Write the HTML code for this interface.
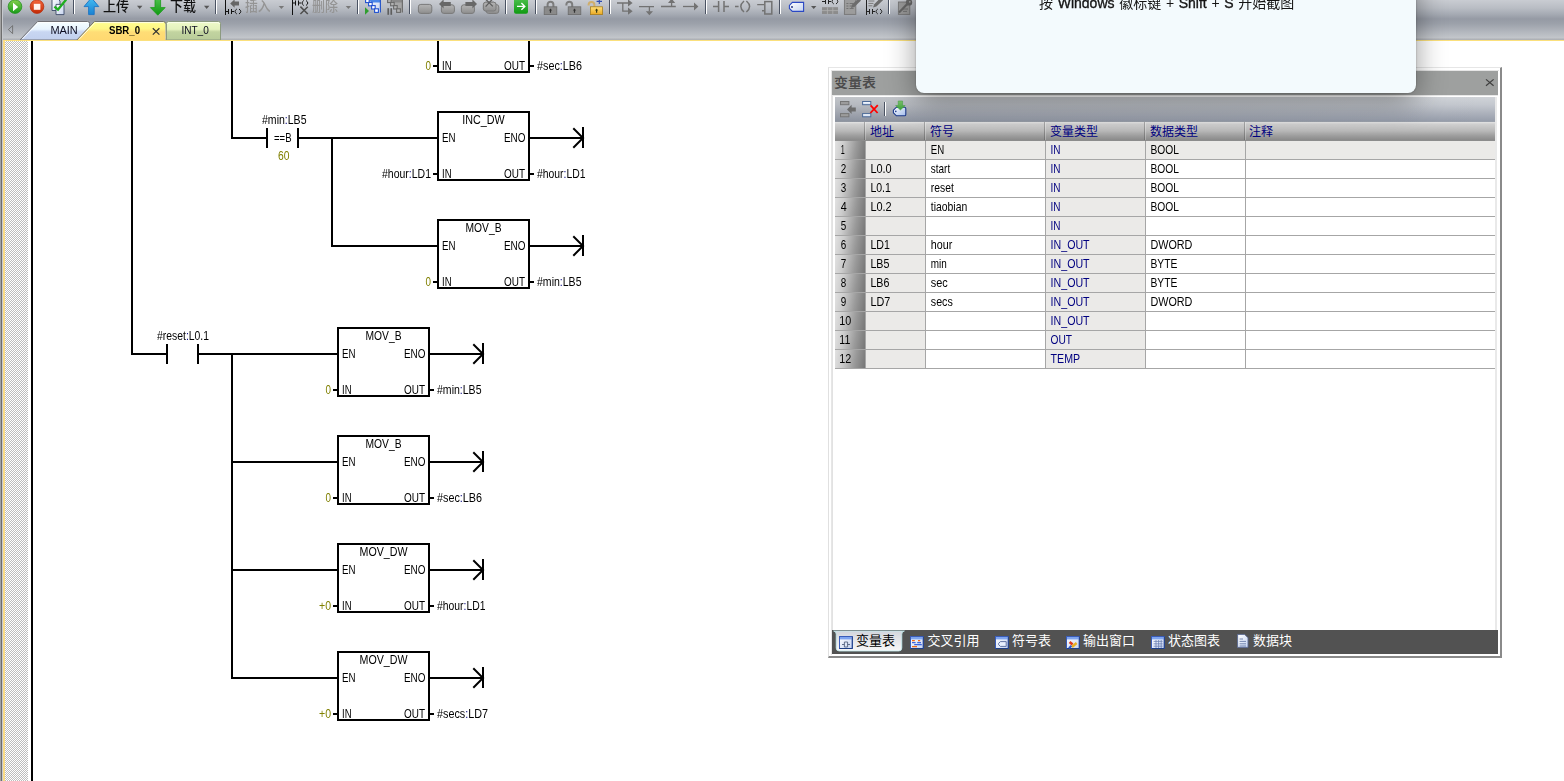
<!DOCTYPE html>
<html><head><meta charset="utf-8"><title>SBR_0</title>
<style>
html,body{margin:0;padding:0;}
body{width:1564px;height:781px;overflow:hidden;background:#fff;position:relative;font-family:"Liberation Sans","Noto Sans CJK SC",sans-serif;}
.abs{position:absolute;}
#tb{left:0;top:0;width:1564px;height:40px;background:linear-gradient(to bottom,#c9ccd2 0px,#b9bdc4 8px,#a6abb4 14px,#959aa4 19px,#9da2ab 24px,#b3b7be 32px,#c3c6cb 38px,#aeb1b6 39px,#aeb1b6 40px);}
#yl{left:3px;top:40px;width:1561px;height:1px;background:#fbe07c;}
#lb{left:0;top:0;width:3px;height:781px;background:linear-gradient(to right,#a2a2a2 0,#a2a2a2 1px,#6e6e6e 1px,#6e6e6e 2px,#c6c9ce 2px,#c6c9ce 3px);}
#ly{left:3px;top:40px;width:2px;height:741px;background:#fbdc86;}
#gut{left:5px;top:41px;width:23px;height:740px;background-color:#fff;background-image:linear-gradient(45deg,#bdbdbd 25%,transparent 25%,transparent 75%,#bdbdbd 75%),linear-gradient(45deg,#bdbdbd 25%,transparent 25%,transparent 75%,#bdbdbd 75%);background-size:2px 2px;background-position:0 0,1px 1px;}
svg{position:absolute;left:0;top:0;overflow:visible;}
#lad,#ptx{will-change:transform;}
.lt{font-family:"Liberation Sans",sans-serif;font-size:12.4px;fill:#000;}
.ol{fill:#808000;}
.cj{font-family:"Liberation Sans","Noto Sans CJK SC",sans-serif;}
</style></head><body>
<div class="abs" id="tb"></div><div class="abs" id="lb"></div><div class="abs" id="yl"></div><div class="abs" id="ly"></div><div class="abs" id="gut"></div>
<svg id="lad" width="1564" height="781" viewBox="0 0 1564 781">
<g shape-rendering="crispEdges" fill="#000">
<rect x="31" y="41" width="2" height="740"/><rect x="131" y="41" width="2" height="314"/><rect x="231" y="41" width="2" height="98"/><rect x="437" y="41" width="2" height="32"/><rect x="528" y="41" width="2" height="32"/><rect x="437" y="71" width="93" height="2"/><rect x="433" y="65" width="4" height="2"/><rect x="530" y="65" width="4" height="2"/><rect x="231" y="137" width="37" height="2"/><rect x="266" y="128" width="2" height="20"/><rect x="297" y="128" width="2" height="20"/><rect x="297" y="137" width="140" height="2"/><rect x="331" y="137" width="2" height="110"/><rect x="331" y="245" width="106" height="2"/><rect x="437" y="111" width="93" height="2"/><rect x="437" y="179" width="93" height="2"/><rect x="437" y="111" width="2" height="70"/><rect x="528" y="111" width="2" height="70"/><rect x="530" y="137" width="54" height="2"/><rect x="582" y="127" width="2" height="21"/><rect x="433" y="173" width="4" height="2"/><rect x="530" y="173" width="4" height="2"/><rect x="437" y="219" width="93" height="2"/><rect x="437" y="287" width="93" height="2"/><rect x="437" y="219" width="2" height="70"/><rect x="528" y="219" width="2" height="70"/><rect x="530" y="245" width="54" height="2"/><rect x="582" y="235" width="2" height="21"/><rect x="433" y="281" width="4" height="2"/><rect x="530" y="281" width="4" height="2"/><rect x="131" y="353" width="37" height="2"/><rect x="166" y="344" width="2" height="20"/><rect x="197" y="344" width="2" height="20"/><rect x="197" y="353" width="140" height="2"/><rect x="231" y="353" width="2" height="326"/><rect x="231" y="461" width="106" height="2"/><rect x="231" y="569" width="106" height="2"/><rect x="231" y="677" width="106" height="2"/><rect x="337" y="327" width="93" height="2"/><rect x="337" y="395" width="93" height="2"/><rect x="337" y="327" width="2" height="70"/><rect x="428" y="327" width="2" height="70"/><rect x="430" y="353" width="54" height="2"/><rect x="482" y="343" width="2" height="21"/><rect x="333" y="389" width="4" height="2"/><rect x="430" y="389" width="4" height="2"/><rect x="337" y="435" width="93" height="2"/><rect x="337" y="503" width="93" height="2"/><rect x="337" y="435" width="2" height="70"/><rect x="428" y="435" width="2" height="70"/><rect x="430" y="461" width="54" height="2"/><rect x="482" y="451" width="2" height="21"/><rect x="333" y="497" width="4" height="2"/><rect x="430" y="497" width="4" height="2"/><rect x="337" y="543" width="93" height="2"/><rect x="337" y="611" width="93" height="2"/><rect x="337" y="543" width="2" height="70"/><rect x="428" y="543" width="2" height="70"/><rect x="430" y="569" width="54" height="2"/><rect x="482" y="559" width="2" height="21"/><rect x="333" y="605" width="4" height="2"/><rect x="430" y="605" width="4" height="2"/><rect x="337" y="651" width="93" height="2"/><rect x="337" y="719" width="93" height="2"/><rect x="337" y="651" width="2" height="70"/><rect x="428" y="651" width="2" height="70"/><rect x="430" y="677" width="54" height="2"/><rect x="482" y="667" width="2" height="21"/><rect x="333" y="713" width="4" height="2"/><rect x="430" y="713" width="4" height="2"/>
</g>
<g fill="none" stroke="#000" stroke-width="2" stroke-linecap="square">
<path d="M574 129 L583 138 L574 147"/><path d="M574 237 L583 246 L574 255"/><path d="M474 345 L483 354 L474 363"/><path d="M474 453 L483 462 L474 471"/><path d="M474 561 L483 570 L474 579"/><path d="M474 669 L483 678 L474 687"/>
</g>
<text class="lt" x="442" y="70" textLength="9.5" lengthAdjust="spacingAndGlyphs">IN</text>
<text class="lt" x="504" y="70" textLength="21" lengthAdjust="spacingAndGlyphs">OUT</text>
<text class="lt ol" x="431" y="70" textLength="5.5" lengthAdjust="spacingAndGlyphs" text-anchor="end">0</text>
<text class="lt" x="537" y="70" textLength="45" lengthAdjust="spacingAndGlyphs">#sec<tspan fill="#000080">:</tspan>LB6</text>
<text class="lt" x="262" y="124" textLength="44.5" lengthAdjust="spacingAndGlyphs">#min<tspan fill="#000080">:</tspan>LB5</text>
<text class="lt" x="274" y="142" textLength="17.5" lengthAdjust="spacingAndGlyphs">==B</text>
<text class="lt ol" x="278" y="160" textLength="11.5" lengthAdjust="spacingAndGlyphs">60</text>
<text class="lt" x="483.5" y="124" textLength="42.5" lengthAdjust="spacingAndGlyphs" text-anchor="middle">INC_DW</text>
<text class="lt" x="442" y="142" textLength="13.5" lengthAdjust="spacingAndGlyphs">EN</text>
<text class="lt" x="504" y="142" textLength="21.5" lengthAdjust="spacingAndGlyphs">ENO</text>
<text class="lt" x="442" y="178" textLength="9.5" lengthAdjust="spacingAndGlyphs">IN</text>
<text class="lt" x="504" y="178" textLength="21" lengthAdjust="spacingAndGlyphs">OUT</text>
<text class="lt" x="431" y="178" textLength="49" lengthAdjust="spacingAndGlyphs" text-anchor="end">#hour<tspan fill="#000080">:</tspan>LD1</text>
<text class="lt" x="537" y="178" textLength="48.5" lengthAdjust="spacingAndGlyphs">#hour<tspan fill="#000080">:</tspan>LD1</text>
<text class="lt" x="483.5" y="232" textLength="36" lengthAdjust="spacingAndGlyphs" text-anchor="middle">MOV_B</text>
<text class="lt" x="442" y="250" textLength="13.5" lengthAdjust="spacingAndGlyphs">EN</text>
<text class="lt" x="504" y="250" textLength="21.5" lengthAdjust="spacingAndGlyphs">ENO</text>
<text class="lt" x="442" y="286" textLength="9.5" lengthAdjust="spacingAndGlyphs">IN</text>
<text class="lt" x="504" y="286" textLength="21" lengthAdjust="spacingAndGlyphs">OUT</text>
<text class="lt ol" x="431" y="286" textLength="5.5" lengthAdjust="spacingAndGlyphs" text-anchor="end">0</text>
<text class="lt" x="537" y="286" textLength="44.5" lengthAdjust="spacingAndGlyphs">#min<tspan fill="#000080">:</tspan>LB5</text>
<text class="lt" x="157" y="340" textLength="52" lengthAdjust="spacingAndGlyphs">#reset<tspan fill="#000080">:</tspan>L0.1</text>
<text class="lt" x="383.5" y="340" textLength="36" lengthAdjust="spacingAndGlyphs" text-anchor="middle">MOV_B</text>
<text class="lt" x="342" y="358" textLength="13.5" lengthAdjust="spacingAndGlyphs">EN</text>
<text class="lt" x="404" y="358" textLength="21.5" lengthAdjust="spacingAndGlyphs">ENO</text>
<text class="lt" x="342" y="394" textLength="9.5" lengthAdjust="spacingAndGlyphs">IN</text>
<text class="lt" x="404" y="394" textLength="21" lengthAdjust="spacingAndGlyphs">OUT</text>
<text class="lt ol" x="331" y="394" textLength="5.5" lengthAdjust="spacingAndGlyphs" text-anchor="end">0</text>
<text class="lt" x="437" y="394" textLength="44.5" lengthAdjust="spacingAndGlyphs">#min<tspan fill="#000080">:</tspan>LB5</text>
<text class="lt" x="383.5" y="448" textLength="36" lengthAdjust="spacingAndGlyphs" text-anchor="middle">MOV_B</text>
<text class="lt" x="342" y="466" textLength="13.5" lengthAdjust="spacingAndGlyphs">EN</text>
<text class="lt" x="404" y="466" textLength="21.5" lengthAdjust="spacingAndGlyphs">ENO</text>
<text class="lt" x="342" y="502" textLength="9.5" lengthAdjust="spacingAndGlyphs">IN</text>
<text class="lt" x="404" y="502" textLength="21" lengthAdjust="spacingAndGlyphs">OUT</text>
<text class="lt ol" x="331" y="502" textLength="5.5" lengthAdjust="spacingAndGlyphs" text-anchor="end">0</text>
<text class="lt" x="437" y="502" textLength="45" lengthAdjust="spacingAndGlyphs">#sec<tspan fill="#000080">:</tspan>LB6</text>
<text class="lt" x="383.5" y="556" textLength="48" lengthAdjust="spacingAndGlyphs" text-anchor="middle">MOV_DW</text>
<text class="lt" x="342" y="574" textLength="13.5" lengthAdjust="spacingAndGlyphs">EN</text>
<text class="lt" x="404" y="574" textLength="21.5" lengthAdjust="spacingAndGlyphs">ENO</text>
<text class="lt" x="342" y="610" textLength="9.5" lengthAdjust="spacingAndGlyphs">IN</text>
<text class="lt" x="404" y="610" textLength="21" lengthAdjust="spacingAndGlyphs">OUT</text>
<text class="lt ol" x="331" y="610" textLength="12" lengthAdjust="spacingAndGlyphs" text-anchor="end">+0</text>
<text class="lt" x="437" y="610" textLength="48.5" lengthAdjust="spacingAndGlyphs">#hour<tspan fill="#000080">:</tspan>LD1</text>
<text class="lt" x="383.5" y="664" textLength="48" lengthAdjust="spacingAndGlyphs" text-anchor="middle">MOV_DW</text>
<text class="lt" x="342" y="682" textLength="13.5" lengthAdjust="spacingAndGlyphs">EN</text>
<text class="lt" x="404" y="682" textLength="21.5" lengthAdjust="spacingAndGlyphs">ENO</text>
<text class="lt" x="342" y="718" textLength="9.5" lengthAdjust="spacingAndGlyphs">IN</text>
<text class="lt" x="404" y="718" textLength="21" lengthAdjust="spacingAndGlyphs">OUT</text>
<text class="lt ol" x="331" y="718" textLength="12" lengthAdjust="spacingAndGlyphs" text-anchor="end">+0</text>
<text class="lt" x="437" y="718" textLength="51" lengthAdjust="spacingAndGlyphs">#secs<tspan fill="#000080">:</tspan>LD7</text>
</svg>
<svg id="tbi" width="1564" height="41" viewBox="0 0 1564 41">
<defs>
<linearGradient id="gG" x1="0" y1="0" x2="0" y2="1"><stop offset="0" stop-color="#86cf4e"/><stop offset="1" stop-color="#179c1a"/></linearGradient>
<linearGradient id="gR" x1="0" y1="0" x2="0" y2="1"><stop offset="0" stop-color="#f4683c"/><stop offset="1" stop-color="#c22a05"/></linearGradient>
<linearGradient id="gB" x1="0" y1="0" x2="0" y2="1"><stop offset="0" stop-color="#45bdf3"/><stop offset="1" stop-color="#1a82d2"/></linearGradient>
<linearGradient id="gD" x1="0" y1="0" x2="1" y2="1"><stop offset="0" stop-color="#ffffff"/><stop offset="1" stop-color="#c4d2ee"/></linearGradient>
<linearGradient id="gA" x1="0" y1="0" x2="0" y2="1"><stop offset="0" stop-color="#4fc24f"/><stop offset="1" stop-color="#109a12"/></linearGradient>
<linearGradient id="gY" x1="0" y1="0" x2="0" y2="1"><stop offset="0" stop-color="#ffe07a"/><stop offset="1" stop-color="#eaa820"/></linearGradient>
<linearGradient id="gK" x1="0" y1="0" x2="0" y2="1"><stop offset="0" stop-color="#b4b4b4"/><stop offset="1" stop-color="#8e8e8e"/></linearGradient>
<g id="sep"><rect x="0" y="0" width="1" height="14" fill="#4a5262"/><rect x="1" y="0" width="1" height="14" fill="#fff"/></g>
<path id="dd" d="M0 0h5.4l-2.7 3.2z"/>
</defs>
<!-- run / stop -->
<circle cx="15" cy="6.6" r="6.8" fill="url(#gG)" stroke="#25901f" stroke-width="0.8"/>
<path d="M13 2.8v8.4l5.2-4.2z" fill="#fff"/>
<circle cx="37" cy="6.6" r="6.8" fill="url(#gR)" stroke="#b83010" stroke-width="0.8"/>
<rect x="33.8" y="3.8" width="6.6" height="6" fill="#fff3ee"/>
<!-- compile docs -->
<path d="M52 -1h6l2 2v9.5h-8z" fill="url(#gD)" stroke="#3b4a68" stroke-width="0.9"/>
<path d="M56 4.4h8v10.2h-8z" fill="url(#gD)" stroke="#3b4a68" stroke-width="0.9"/>
<path d="M54.4 6.6l3.6 3 8.2-10" fill="none" stroke="#1fae1f" stroke-width="2.3"/>
<use href="#sep" x="73" y="0"/>
<!-- upload -->
<path d="M91.4 -2.2l7.4 8.8h-4.6v8h-5.6v-8h-4.6z" fill="url(#gB)" stroke="#1c74c4" stroke-width="0.9"/>
<text x="103" y="10.6" font-size="13.4" font-weight="500" fill="#111" class="cj" textLength="26.2" lengthAdjust="spacingAndGlyphs">上传</text>
<use href="#dd" x="137" y="5.8" fill="#565656"/>
<!-- download -->
<path d="M155 -2h5.6v9.6h4.6l-7.4 7.6l-7.4-7.6h4.6z" fill="url(#gA)" stroke="#1c9a1c" stroke-width="0.8"/>
<text x="170" y="10.6" font-size="13.4" font-weight="500" fill="#111" class="cj" textLength="26" lengthAdjust="spacingAndGlyphs">下载</text>
<use href="#dd" x="204" y="5.8" fill="#565656"/>
<use href="#sep" x="215" y="0"/>
<!-- insert -->
<g stroke="#111" stroke-width="1" fill="none">
<path d="M225.5 0v15"/><path d="M225.5 11.5h3M228.5 9v5M231.5 9v5M231.5 11.5h2.5M236.8 9q-3.6 2.5 0 5M239 9q3.6 2.5 0 5"/>
</g>
<path d="M230.2 3.4l4.4-4v2.2h4.4v4h-4.4v2.2z" fill="#666"/>
<text x="245" y="10.6" font-size="13.4" font-weight="500" fill="#949494" class="cj" textLength="25.6" lengthAdjust="spacingAndGlyphs">插入</text>
<use href="#dd" x="278.7" y="5.9" fill="#787878"/>
<!-- delete -->
<g stroke="#111" stroke-width="1" fill="none">
<path d="M292.5 0v15"/><path d="M292.5 3h3M295.5 0.5v5M298.5 0.5v5M298.5 3h2.5M303.8 0.5q-3.6 2.5 0 5M306 0.5q3.6 2.5 0 5"/>
</g>
<path d="M300.4 6.6l7.4 7.4M307.8 6.8l-7.4 7.2" stroke="#4e4e4e" stroke-width="1.5" fill="none"/>
<text x="312" y="10.6" font-size="13.4" font-weight="500" fill="#949494" class="cj" textLength="26" lengthAdjust="spacingAndGlyphs">删除</text>
<use href="#dd" x="345.7" y="5.9" fill="#787878"/>
<use href="#sep" x="357" y="0"/>
<!-- chart status (blue) -->
<path d="M367 -2H380.6V12.4H377.4z" fill="url(#gD)"/><path d="M367 -2H380.6V2.6H371.4z" fill="#4a86e8"/><path d="M380.4 -2V12.6" stroke="#2a58c8" stroke-width="1.2"/>
<g fill="#fff" stroke="#2050d0" stroke-width="1.1"><rect x="365.6" y="-1" width="3.6" height="3.6"/><rect x="368.6" y="2.4" width="3.6" height="3.4"/><rect x="371.6" y="5.6" width="3.6" height="3.4"/><rect x="374.6" y="8.8" width="3.8" height="3.6"/></g>
<path d="M365 7.2l4 3.8l-4 3.8z" fill="#2f9e2f"/>
<!-- chart status (gray) -->
<path d="M389 -2H402.6V12.4H399.4z" fill="#a6a6a6"/><path d="M389 -2H402.6V2.6H393.4z" fill="#8a8a8a"/><path d="M402.4 -2V12.6" stroke="#6e6e6e" stroke-width="1.2"/>
<g fill="#b2b2b2" stroke="#6a6a6a" stroke-width="1.1"><rect x="387.6" y="-1" width="3.6" height="3.6"/><rect x="390.6" y="2.4" width="3.6" height="3.4"/><rect x="393.6" y="5.6" width="3.6" height="3.4"/><rect x="396.6" y="8.8" width="3.8" height="3.6"/></g>
<rect x="387.4" y="8.2" width="1.7" height="6.6" fill="#5e5e5e"/><rect x="390.4" y="8.2" width="1.7" height="6.6" fill="#5e5e5e"/>
<use href="#sep" x="409" y="0"/>
<!-- 4 gray network icons -->
<rect x="418.4" y="4.4" width="13.4" height="9" rx="2.4" fill="url(#gK)" stroke="#7a7a7a"/>
<rect x="441.4" y="4.8" width="13" height="8.6" rx="2.4" fill="url(#gK)" stroke="#7a7a7a"/>
<path d="M439 4l4.6-4.6v2.6h7.2v4h-7.2v2.6z" fill="#686868"/>
<rect x="461.4" y="4.8" width="13" height="8.6" rx="2.4" fill="url(#gK)" stroke="#7a7a7a"/>
<path d="M477 4l-4.6-4.6v2.6h-7v4h7v2.6z" fill="#686868"/>
<rect x="483.4" y="2.2" width="12.6" height="8.8" rx="2.4" fill="url(#gK)" stroke="#7a7a7a"/>
<rect x="486.2" y="4.6" width="12.6" height="8.8" rx="2.4" fill="url(#gK)" stroke="#7a7a7a"/>
<rect x="483.4" y="2.2" width="12.6" height="8.8" rx="2.4" fill="url(#gK)" stroke="#7a7a7a"/>
<path d="M485.6 6.6l7-7.6M492.8 6.4l-7-7" stroke="#5e5e5e" stroke-width="1.3" fill="none"/>
<use href="#sep" x="505" y="0"/>
<!-- green go -->
<rect x="514" y="-2" width="14" height="15.7" rx="2" fill="url(#gA)"/>
<path d="M517 6.4h7.6M521.4 3l3.4 3.4l-3.4 3.4" stroke="#fff" stroke-width="1.4" fill="none"/>
<use href="#sep" x="535" y="0"/>
<!-- locks -->
<g>
<path d="M547.6 7v-2.4a2.9 2.9 0 0 1 5.8 0v2.4" fill="none" stroke="#7c7c7c" stroke-width="2"/>
<rect x="544.2" y="6.8" width="12.6" height="7.8" fill="#8a8a8a" stroke="#6c6c6c" stroke-width="0.8"/>
<path d="M550.5 8.6l1.6 2h-1v2.2h-1.2v-2.2h-1z" fill="#333"/>
<path d="M566.4 5.6v-1a2.9 2.9 0 0 1 5.8 0v2.4" fill="none" stroke="#7c7c7c" stroke-width="2"/>
<rect x="568.2" y="6.8" width="12.6" height="7.8" fill="#8a8a8a" stroke="#6c6c6c" stroke-width="0.8"/>
<path d="M574.5 8.6l1.6 2h-1v2.2h-1.2v-2.2h-1z" fill="#333"/>
<path d="M588.6 5.6v-0.8a2.9 2.9 0 0 1 5.8 0v2.2" fill="none" stroke="#cfae6c" stroke-width="2"/>
<rect x="590.6" y="6.8" width="12" height="7.8" fill="url(#gY)" stroke="#a67c1c" stroke-width="0.8"/>
<path d="M596.6 8.6l1.6 2h-1v2.2h-1.2v-2.2h-1z" fill="#3c3a10"/>
<path d="M596.6 1.4h5.4M599.3 -1.4v5.4" stroke="#2c4cb0" stroke-width="1.1"/>
</g>
<use href="#sep" x="609" y="0"/>
<!-- line icons -->
<g stroke="#727272" stroke-width="1.3" fill="none">
<path d="M617 3h12M622.8 3v8.2h6"/>
<path d="M639 6.6h15M649.4 6.6v5"/>
<path d="M661 6.5h14.8M671.6 6.5v-4"/>
<path d="M683 6.5h12"/>
<path d="M713 6.5h5.6M724 6.5h5M718.6 1v11M724 1v11" stroke-width="1.5"/>
<path d="M735 6.5h3.6M744 1q-6.4 5.5 0 11M746.4 1q6.4 5.5 0 11" stroke-width="1.5"/>
<path d="M757.2 4.6h7M762 10.8h2.4" stroke-width="1.4"/><rect x="764.8" y="1.6" width="7" height="12.4" stroke-width="1.5"/>
</g>
<g fill="#727272"><path d="M628 -0.6l4.6 3.6l-4.6 3.6z"/><path d="M628 7.6l4.6 3.6l-4.6 3.6z"/><path d="M645.8 11.2h7.2l-3.6 4z"/><path d="M668 3h7.2l-3.6-4.4z"/><path d="M694 2.6l4.4 3.9l-4.4 3.9z"/></g>
<use href="#sep" x="705" y="0"/>
<use href="#sep" x="779" y="0"/>
<!-- tag -->
<path d="M792.4 2.4h11.2v9h-11.2l-3-3v-3z" fill="url(#gD)" stroke="#2a48c4" stroke-width="1.1"/>
<circle cx="792" cy="7" r="0.9" fill="#10207a"/>
<use href="#dd" x="811" y="5.9" fill="#565656"/>
<!-- table icon -->
<g stroke="#222" stroke-width="1" fill="none"><path d="M822 1.5h3M825.5 -1v5M828.5 -1v5M828.5 1.5h2.5M833.8 -1q-3.6 2.5 0 5M836 -1q3.6 2.5 0 5"/></g>
<rect x="822" y="7.2" width="16" height="6.8" fill="#8c8c8c"/><path d="M822 10.6h16M827.4 7.2v6.8M832.8 7.2v6.8" stroke="#b0b0b0" stroke-width="0.8"/>
<!-- doc + pencil -->
<rect x="844.4" y="-1" width="11.4" height="15.4" fill="#9c9c9c" stroke="#767676" stroke-width="0.9"/>
<path d="M846.4 3.5h2M846.4 6h2M846.4 8.5h2M849.6 3.5h4M849.6 6h4M849.6 8.5h4" stroke="#6e6e6e" stroke-width="0.9"/>
<path d="M851 8l1.2-3.4l6.4-6.4l2.4 2.4l-6.6 6.4z" fill="#6c6c6c"/>
<!-- doc lines + pencil + contact -->
<g stroke="#222" stroke-width="1" fill="none"><path d="M866.5 -1v16"/><path d="M866.5 11.5h3M869.5 9v5M872.5 9v5M872.5 11.5h2.5M877.8 9q-3.6 2.5 0 5M880 9q3.6 2.5 0 5"/></g>
<path d="M868.4 1h6M868.4 3.4h5M868.4 5.8h4" stroke="#7a7a7a" stroke-width="1"/>
<path d="M873 7.6l1.2-3.4l6.4-6.4l2.4 2.4l-6.6 6.4z" fill="#6c6c6c"/>
<use href="#sep" x="888" y="0"/>
<!-- doc + key -->
<rect x="898.4" y="2" width="11.4" height="12.4" fill="#9a9a9a" stroke="#767676" stroke-width="0.9"/>
<path d="M903 9h5M903 11.4h4" stroke="#6e6e6e" stroke-width="0.9"/>
<path d="M899 12.4l8-8.2" stroke="#666" stroke-width="2.2"/><circle cx="909" cy="2.4" r="3.2" fill="#6a6a6a"/><circle cx="909.8" cy="1.8" r="0.9" fill="#aaa"/>
</svg>

<svg id="tabs" width="400" height="40" viewBox="0 0 400 40" style="overflow:hidden">
<defs>
<linearGradient id="tM" x1="0" y1="0" x2="0" y2="1"><stop offset="0" stop-color="#f6ffff"/><stop offset="0.42" stop-color="#e8f4fe"/><stop offset="0.56" stop-color="#c8d6f2"/><stop offset="1" stop-color="#c2d0ee"/></linearGradient>
<linearGradient id="tS" x1="0" y1="0" x2="0" y2="1"><stop offset="0" stop-color="#ffff90"/><stop offset="0.38" stop-color="#fff684"/><stop offset="0.55" stop-color="#ffdd76"/><stop offset="1" stop-color="#ffd870"/></linearGradient>
<linearGradient id="tI" x1="0" y1="0" x2="0" y2="1"><stop offset="0" stop-color="#eefac8"/><stop offset="0.42" stop-color="#e4f2be"/><stop offset="0.56" stop-color="#c2d4a0"/><stop offset="1" stop-color="#b9cc9a"/></linearGradient>
</defs>
<path d="M12.6 25.6l-4.2 4l4.2 4z" fill="none" stroke="#6e6e6e" stroke-width="0.9"/>
<!-- MAIN -->
<path d="M20 40L37.6 21.5H87.6q2 0 2 2V40z" fill="url(#tM)" stroke="#707074" stroke-width="1"/>
<path d="M22.4 39L38.4 22.6H87.4" fill="none" stroke="#ffffff" stroke-width="1" opacity=".9"/>
<!-- INT_0 -->
<path d="M166.5 40V23.5q0-2 2-2H218.5q2 0 2 2V40z" fill="url(#tI)" stroke="#8c9a80" stroke-width="1"/>
<path d="M167.6 24q0-1.4 1.4-1.4H218q1.4 0 1.4 1.4" fill="none" stroke="#fbfff0" stroke-width="1" opacity=".9"/>
<!-- SBR_0 active -->
<path d="M76.4 40.5L94.4 21.5H163.4q2 0 2 2V40.5z" fill="url(#tS)"/>
<path d="M76.4 40.5L94.4 21.5H163.4q2 0 2 2" stroke="#74746c" stroke-width="1" fill="none"/>
<path d="M79 39.4L95 22.6H163.6" fill="none" stroke="#ffffe8" stroke-width="1" opacity=".95"/>
<text x="50.4" y="34" font-size="11.4" fill="#0c0c20" textLength="27.4" lengthAdjust="spacingAndGlyphs">MAIN</text>
<text x="109" y="34" font-size="11.4" font-weight="bold" fill="#000" textLength="31" lengthAdjust="spacingAndGlyphs">SBR_0</text>
<path d="M152.8 28.2l6.6 6.4M159.4 28.2l-6.6 6.4" stroke="#333" stroke-width="1.2" fill="none"/>
<text x="181.4" y="34" font-size="11.4" fill="#0c0c20" textLength="27.4" lengthAdjust="spacingAndGlyphs">INT_0</text>
</svg>

<style>
#pn{left:828px;top:67px;width:674px;height:591px;background:#fff;box-sizing:border-box;border-top:1px solid #e6e6e6;border-left:1px solid #e0e0e0;border-right:2px solid #8a8a8a;border-bottom:2px solid #8a8a8a;}
#pn2{left:831px;top:70px;width:668px;height:585px;box-sizing:border-box;border-top:1px solid #e6e6e6;border-left:1px solid #e6e6e6;}
#ttl{left:832px;top:71px;width:666px;height:24px;background:#9ea09f;}
#ttl span{position:absolute;left:2px;top:2px;font-size:14px;line-height:18px;font-weight:bold;color:#4c4c4c;text-shadow:0 1px 0 rgba(230,230,230,.4);display:inline-block;transform:scale(1,0.9);transform-origin:left center;}
#ptxt b{font-weight:400;-webkit-text-stroke:0.35px #151515;}
#fr{left:832px;top:95px;width:666px;height:535px;background:#fff;box-sizing:border-box;border-left:1px solid #e2e2e2;border-top:1px solid #e8e8e8;}
#rg{left:1495px;top:97px;width:2px;height:533px;background:#e9e9e9;}
#ptb{left:835px;top:97px;width:660px;height:25px;background:linear-gradient(to right,rgba(0,0,0,.07),rgba(0,0,0,.03) 60%,rgba(0,0,0,0)),linear-gradient(to bottom,#d0d3d8 0,#c3c7ce 8px,#adb2bc 16px,#979eab 24px,#a0a5ae 25px);}
#hd{left:835px;top:122px;width:660px;height:19px;background:linear-gradient(to bottom,#e4e4e4 0,#d0d0d0 2px,#b8b8b8 9px,#9c9c9c 14px,#8a8a8a 18px,#8f8f8f 19px);}
.hc{position:absolute;top:123px;height:19px;font-size:12px;line-height:19px;color:#000080;white-space:nowrap;}
.hl{position:absolute;top:122px;width:1px;height:18px;background:linear-gradient(to bottom,#e8e8e8,#a8a8a8);}
.hd2{position:absolute;top:122px;width:1px;height:18px;background:linear-gradient(to bottom,#a8a8a8,#707070);}
.row{position:absolute;left:835px;width:660px;height:19px;}
.row i{position:absolute;top:0;height:18px;display:block;}
.rn{left:0;width:30px;background:linear-gradient(100deg,#e2e2e2 0%,#cccccc 28%,#9a9a9a 66%,#767676 100%);}
.g{background:#ebeae8;}
.w{background:#fff;}
.ln{position:absolute;background:#a6a6a6;}
#bt{left:832px;top:630px;width:666px;height:24px;background:#525252;}
#at{display:none;}
.bl{position:absolute;top:630px;height:22px;line-height:22px;font-size:13px;color:#fff;white-space:nowrap;}
</style>
<div class="abs" id="pn"></div><div class="abs" id="pn2"></div>
<div class="abs" id="ttl"><span class="cj">变量表</span></div>
<div class="abs" id="fr"></div><div class="abs" id="rg"></div>
<div class="abs" id="ptb"></div><div class="abs" id="hd"></div>
<div class="hd2" style="left:864px"></div><div class="hl" style="left:865px"></div><div class="hd2" style="left:924px"></div><div class="hl" style="left:925px"></div><div class="hd2" style="left:1044px"></div><div class="hl" style="left:1045px"></div><div class="hd2" style="left:1144px"></div><div class="hl" style="left:1145px"></div><div class="hd2" style="left:1244px"></div><div class="hl" style="left:1245px"></div><div class="hc cj" style="left:870px">地址</div><div class="hc cj" style="left:930px">符号</div><div class="hc cj" style="left:1050px">变量类型</div><div class="hc cj" style="left:1150px">数据类型</div><div class="hc cj" style="left:1249px">注释</div>
<div class="row" style="top:141px"><i class="rn"></i><i class="g" style="left:30px;width:630px"></i></div><div class="row" style="top:160px"><i class="rn"></i><i class="g" style="left:30px;width:60px"></i><i class="w" style="left:90px;width:120px"></i><i class="g" style="left:210px;width:100px"></i><i class="w" style="left:310px;width:350px"></i></div><div class="row" style="top:179px"><i class="rn"></i><i class="g" style="left:30px;width:60px"></i><i class="w" style="left:90px;width:120px"></i><i class="g" style="left:210px;width:100px"></i><i class="w" style="left:310px;width:350px"></i></div><div class="row" style="top:198px"><i class="rn"></i><i class="g" style="left:30px;width:60px"></i><i class="w" style="left:90px;width:120px"></i><i class="g" style="left:210px;width:100px"></i><i class="w" style="left:310px;width:350px"></i></div><div class="row" style="top:217px"><i class="rn"></i><i class="g" style="left:30px;width:60px"></i><i class="w" style="left:90px;width:120px"></i><i class="g" style="left:210px;width:100px"></i><i class="w" style="left:310px;width:350px"></i></div><div class="row" style="top:236px"><i class="rn"></i><i class="g" style="left:30px;width:60px"></i><i class="w" style="left:90px;width:120px"></i><i class="g" style="left:210px;width:100px"></i><i class="w" style="left:310px;width:350px"></i></div><div class="row" style="top:255px"><i class="rn"></i><i class="g" style="left:30px;width:60px"></i><i class="w" style="left:90px;width:120px"></i><i class="g" style="left:210px;width:100px"></i><i class="w" style="left:310px;width:350px"></i></div><div class="row" style="top:274px"><i class="rn"></i><i class="g" style="left:30px;width:60px"></i><i class="w" style="left:90px;width:120px"></i><i class="g" style="left:210px;width:100px"></i><i class="w" style="left:310px;width:350px"></i></div><div class="row" style="top:293px"><i class="rn"></i><i class="g" style="left:30px;width:60px"></i><i class="w" style="left:90px;width:120px"></i><i class="g" style="left:210px;width:100px"></i><i class="w" style="left:310px;width:350px"></i></div><div class="row" style="top:312px"><i class="rn"></i><i class="g" style="left:30px;width:60px"></i><i class="w" style="left:90px;width:120px"></i><i class="g" style="left:210px;width:100px"></i><i class="w" style="left:310px;width:350px"></i></div><div class="row" style="top:331px"><i class="rn"></i><i class="g" style="left:30px;width:60px"></i><i class="w" style="left:90px;width:120px"></i><i class="g" style="left:210px;width:100px"></i><i class="w" style="left:310px;width:350px"></i></div><div class="row" style="top:350px"><i class="rn"></i><i class="g" style="left:30px;width:60px"></i><i class="w" style="left:90px;width:120px"></i><i class="g" style="left:210px;width:100px"></i><i class="w" style="left:310px;width:350px"></i></div>
<div class="ln" style="left:835px;top:159px;width:660px;height:1px"></div><div class="ln" style="left:835px;top:178px;width:660px;height:1px"></div><div class="ln" style="left:835px;top:197px;width:660px;height:1px"></div><div class="ln" style="left:835px;top:216px;width:660px;height:1px"></div><div class="ln" style="left:835px;top:235px;width:660px;height:1px"></div><div class="ln" style="left:835px;top:254px;width:660px;height:1px"></div><div class="ln" style="left:835px;top:273px;width:660px;height:1px"></div><div class="ln" style="left:835px;top:292px;width:660px;height:1px"></div><div class="ln" style="left:835px;top:311px;width:660px;height:1px"></div><div class="ln" style="left:835px;top:330px;width:660px;height:1px"></div><div class="ln" style="left:835px;top:349px;width:660px;height:1px"></div><div class="ln" style="left:835px;top:368px;width:660px;height:1px"></div><div class="ln" style="left:865px;top:141px;width:1px;height:228px"></div><div class="ln" style="left:925px;top:141px;width:1px;height:228px"></div><div class="ln" style="left:1045px;top:141px;width:1px;height:228px"></div><div class="ln" style="left:1145px;top:141px;width:1px;height:228px"></div><div class="ln" style="left:1245px;top:141px;width:1px;height:228px"></div>
<svg id="ptx" width="1564" height="781" viewBox="0 0 1564 781">
<text class="lt" x="840.8" y="154" textLength="4" lengthAdjust="spacingAndGlyphs">1</text><text class="lt" x="930.8" y="154" textLength="13.4" lengthAdjust="spacingAndGlyphs" style="fill:#000">EN</text><text class="lt" x="1050.6" y="154" textLength="10" lengthAdjust="spacingAndGlyphs" style="fill:#000080">IN</text><text class="lt" x="1150.4" y="154" textLength="28.5" lengthAdjust="spacingAndGlyphs" style="fill:#000">BOOL</text>
<text class="lt" x="840.8" y="173" textLength="5.5" lengthAdjust="spacingAndGlyphs">2</text><text class="lt" x="870.4" y="173" textLength="21.3" lengthAdjust="spacingAndGlyphs" style="fill:#000">L0.0</text><text class="lt" x="930.8" y="173" textLength="19.4" lengthAdjust="spacingAndGlyphs" style="fill:#000">start</text><text class="lt" x="1050.6" y="173" textLength="10" lengthAdjust="spacingAndGlyphs" style="fill:#000080">IN</text><text class="lt" x="1150.4" y="173" textLength="28.5" lengthAdjust="spacingAndGlyphs" style="fill:#000">BOOL</text>
<text class="lt" x="840.8" y="192" textLength="5.5" lengthAdjust="spacingAndGlyphs">3</text><text class="lt" x="870.4" y="192" textLength="20.5" lengthAdjust="spacingAndGlyphs" style="fill:#000">L0.1</text><text class="lt" x="930.8" y="192" textLength="23" lengthAdjust="spacingAndGlyphs" style="fill:#000">reset</text><text class="lt" x="1050.6" y="192" textLength="10" lengthAdjust="spacingAndGlyphs" style="fill:#000080">IN</text><text class="lt" x="1150.4" y="192" textLength="28.5" lengthAdjust="spacingAndGlyphs" style="fill:#000">BOOL</text>
<text class="lt" x="840.8" y="211" textLength="6" lengthAdjust="spacingAndGlyphs">4</text><text class="lt" x="870.4" y="211" textLength="21.3" lengthAdjust="spacingAndGlyphs" style="fill:#000">L0.2</text><text class="lt" x="930.8" y="211" textLength="36.4" lengthAdjust="spacingAndGlyphs" style="fill:#000">tiaobian</text><text class="lt" x="1050.6" y="211" textLength="10" lengthAdjust="spacingAndGlyphs" style="fill:#000080">IN</text><text class="lt" x="1150.4" y="211" textLength="28.5" lengthAdjust="spacingAndGlyphs" style="fill:#000">BOOL</text>
<text class="lt" x="840.8" y="230" textLength="5.5" lengthAdjust="spacingAndGlyphs">5</text><text class="lt" x="1050.6" y="230" textLength="10" lengthAdjust="spacingAndGlyphs" style="fill:#000080">IN</text>
<text class="lt" x="840.8" y="249" textLength="5.5" lengthAdjust="spacingAndGlyphs">6</text><text class="lt" x="870.4" y="249" textLength="19.5" lengthAdjust="spacingAndGlyphs" style="fill:#000">LD1</text><text class="lt" x="930.8" y="249" textLength="21.5" lengthAdjust="spacingAndGlyphs" style="fill:#000">hour</text><text class="lt" x="1050.6" y="249" textLength="39" lengthAdjust="spacingAndGlyphs" style="fill:#000080">IN_OUT</text><text class="lt" x="1150.4" y="249" textLength="42" lengthAdjust="spacingAndGlyphs" style="fill:#000">DWORD</text>
<text class="lt" x="840.8" y="268" textLength="5.5" lengthAdjust="spacingAndGlyphs">7</text><text class="lt" x="870.4" y="268" textLength="19" lengthAdjust="spacingAndGlyphs" style="fill:#000">LB5</text><text class="lt" x="930.8" y="268" textLength="16" lengthAdjust="spacingAndGlyphs" style="fill:#000">min</text><text class="lt" x="1050.6" y="268" textLength="39" lengthAdjust="spacingAndGlyphs" style="fill:#000080">IN_OUT</text><text class="lt" x="1150.4" y="268" textLength="27" lengthAdjust="spacingAndGlyphs" style="fill:#000">BYTE</text>
<text class="lt" x="840.8" y="287" textLength="5.5" lengthAdjust="spacingAndGlyphs">8</text><text class="lt" x="870.4" y="287" textLength="19" lengthAdjust="spacingAndGlyphs" style="fill:#000">LB6</text><text class="lt" x="930.8" y="287" textLength="17" lengthAdjust="spacingAndGlyphs" style="fill:#000">sec</text><text class="lt" x="1050.6" y="287" textLength="39" lengthAdjust="spacingAndGlyphs" style="fill:#000080">IN_OUT</text><text class="lt" x="1150.4" y="287" textLength="27" lengthAdjust="spacingAndGlyphs" style="fill:#000">BYTE</text>
<text class="lt" x="840.8" y="306" textLength="5.5" lengthAdjust="spacingAndGlyphs">9</text><text class="lt" x="870.4" y="306" textLength="19.8" lengthAdjust="spacingAndGlyphs" style="fill:#000">LD7</text><text class="lt" x="930.8" y="306" textLength="22" lengthAdjust="spacingAndGlyphs" style="fill:#000">secs</text><text class="lt" x="1050.6" y="306" textLength="39" lengthAdjust="spacingAndGlyphs" style="fill:#000080">IN_OUT</text><text class="lt" x="1150.4" y="306" textLength="42" lengthAdjust="spacingAndGlyphs" style="fill:#000">DWORD</text>
<text class="lt" x="839.3" y="325" textLength="12" lengthAdjust="spacingAndGlyphs">10</text><text class="lt" x="1050.6" y="325" textLength="39" lengthAdjust="spacingAndGlyphs" style="fill:#000080">IN_OUT</text>
<text class="lt" x="839.3" y="344" textLength="11" lengthAdjust="spacingAndGlyphs">11</text><text class="lt" x="1050.6" y="344" textLength="21.5" lengthAdjust="spacingAndGlyphs" style="fill:#000080">OUT</text>
<text class="lt" x="839.3" y="363" textLength="12" lengthAdjust="spacingAndGlyphs">12</text><text class="lt" x="1050.6" y="363" textLength="29.5" lengthAdjust="spacingAndGlyphs" style="fill:#000080">TEMP</text>
<path d="M1486 79.4l7.6 6.4M1493.6 79.4l-7.6 6.4" stroke="#3e3e3e" stroke-width="1.2" fill="none"/>
<defs><linearGradient id="pW" x1="0" y1="0" x2="0" y2="1"><stop offset="0" stop-color="#ffffff"/><stop offset="1" stop-color="#c8d8f0"/></linearGradient>
<linearGradient id="pT" x1="0" y1="0" x2="1" y2="1"><stop offset="0" stop-color="#ffffff"/><stop offset="1" stop-color="#a4bff0"/></linearGradient>
<linearGradient id="pG" x1="0" y1="0" x2="0" y2="1"><stop offset="0" stop-color="#7cc46c"/><stop offset="1" stop-color="#3aa23a"/></linearGradient></defs>
<rect x="840.5" y="101.5" width="8.4" height="3.2" fill="#9c9c9c" stroke="#767676"/><rect x="840.5" y="113.6" width="8.4" height="3.2" fill="#9c9c9c" stroke="#767676"/>
<path d="M847 109.4l4.6-4.6v2.6h4.2v4h-4.2v2.6z" fill="#6c6c6c"/>
<rect x="862.6" y="101.5" width="8.2" height="3.2" fill="url(#pW)" stroke="#4c6a98"/><rect x="862.6" y="113.6" width="8.2" height="3.2" fill="url(#pW)" stroke="#4c6a98"/>
<path d="M870.6 105.4l7 7.6M877.8 105.2l-7.4 7.8" stroke="#ff0000" stroke-width="1.8" fill="none"/>
<rect x="884" y="102" width="1" height="14" fill="#4a5262"/><rect x="885" y="102" width="1" height="14" fill="#fff"/>
<path d="M896.4 107.2h8q1.4 0 1.4 1.4v5.8q0 1.4-1.4 1.4h-8l-3-3v-2.6z" fill="url(#pT)" stroke="#1c3a8c" stroke-width="1.1"/>
<circle cx="895.8" cy="111.4" r="0.8" fill="#1c3a8c"/>
<path d="M898.2 101h4.4v4.6h2.6l-4.8 4.4l-4.8-4.4h2.6z" fill="url(#pG)" stroke="#3f9e3f" stroke-width="0.5"/>
</svg>
<div class="abs" id="bt"></div><div class="abs" id="at"></div>

<svg id="bti" width="1564" height="781" viewBox="0 0 1564 781">
<defs><linearGradient id="bW" x1="0" y1="0" x2="1" y2="1"><stop offset="0" stop-color="#ffffff"/><stop offset="1" stop-color="#c6d4f2"/></linearGradient>
<g id="win"><rect x="0.5" y="0.5" width="12.8" height="12" fill="url(#bW)" stroke="#3a5cb8"/><rect x="1" y="1" width="11.8" height="2.4" fill="#7ea4f0"/><path d="M13.3 0.5V12.5H0.5" fill="none" stroke="#1e3f86" stroke-width="1"/></g></defs>
<linearGradient id="aT" x1="0" y1="0" x2="0" y2="1"><stop offset="0" stop-color="#d2d5dc"/><stop offset="0.5" stop-color="#e6e7ea"/><stop offset="1" stop-color="#f8f8f8"/></linearGradient>
<path d="M833.6 631H904.4q-2.6 0.4-2.6 3.2V648q0 3-3 3H839.2q-3 0-3-3V634.2q0-2.8-2.6-3.2z" fill="url(#aT)" stroke="#c4eef0" stroke-width="0.8"/>
<use href="#win" x="839" y="636"/><path d="M842 644.5h2.4M847.6 644.5h2.4M844.4 642v5h3.2v-5z" stroke="#54627e" stroke-width="0.9" fill="none"/>
<use href="#win" x="910" y="636"/><path d="M912 640.6h2.8M918 640.6h2.2M912 646.6h5" stroke="#f06a1c" stroke-width="1.1"/><path d="M912 642.6h3.6M917.2 642.6h3.8M914.2 644.6h7.6" stroke="#3c64e0" stroke-width="1.1"/>
<use href="#win" x="995" y="636"/><path d="M1000.4 641.6h5.8v4.8h-5.8l-1.8-1.8v-1.2z" fill="#e8f0ff" stroke="#52669a" stroke-width="0.9"/>
<use href="#win" x="1066" y="636"/><path d="M1069.6 642l3 2.6" stroke="#e03a1a" stroke-width="2.6"/><path d="M1072 647l4.6-4" stroke="#e8b020" stroke-width="2.4"/><path d="M1069 648.2l2.4-2.4" stroke="#2c56c8" stroke-width="2"/>
<use href="#win" x="1151" y="636"/><path d="M1153.6 641.4h9M1153.6 643.8h9M1153.6 646.2h9M1156 640v8M1158.6 640v8M1161.2 640v8" stroke="#6c80b4" stroke-width="0.8"/>
<path d="M1237.6 634.4h7l3.4 3.4v9.6h-10.4z" fill="url(#bW)" stroke="#5a6a94" stroke-width="0.9"/><path d="M1239.6 639h3.4M1239.6 641.4h6.4M1239.6 643.8h6.4M1239.6 646h6.4" stroke="#687aa6" stroke-width="0.9"/>
</svg>
<div class="bl cj" style="left:856px;color:#000">变量表</div><div class="bl cj" style="left:927.4px;color:#fff">交叉引用</div><div class="bl cj" style="left:1012px;color:#fff">符号表</div><div class="bl cj" style="left:1083px;color:#fff">输出窗口</div><div class="bl cj" style="left:1168px;color:#fff">状态图表</div><div class="bl cj" style="left:1253px;color:#fff">数据块</div>
<div class="abs" id="pop" style="left:916px;top:-40px;width:500px;height:133px;background:#f3fafd;border-radius:8px;box-shadow:0 0 2px rgba(0,0,0,.35),0 8px 30px rgba(0,0,0,.40);"></div>
<div class="abs cj" style="left:1039px;top:-9px;width:300px;height:24px;font-size:14px;line-height:24px;color:#151515;font-weight:400;white-space:nowrap;word-spacing:0.8px;font-family:'Liberation Sans','Noto Sans CJK SC',sans-serif;"><span id="ptxt">按 <b>Windows</b> 徽标键 + <b>Shift</b> + <b>S</b> 开始截图</span></div>

</body></html>
